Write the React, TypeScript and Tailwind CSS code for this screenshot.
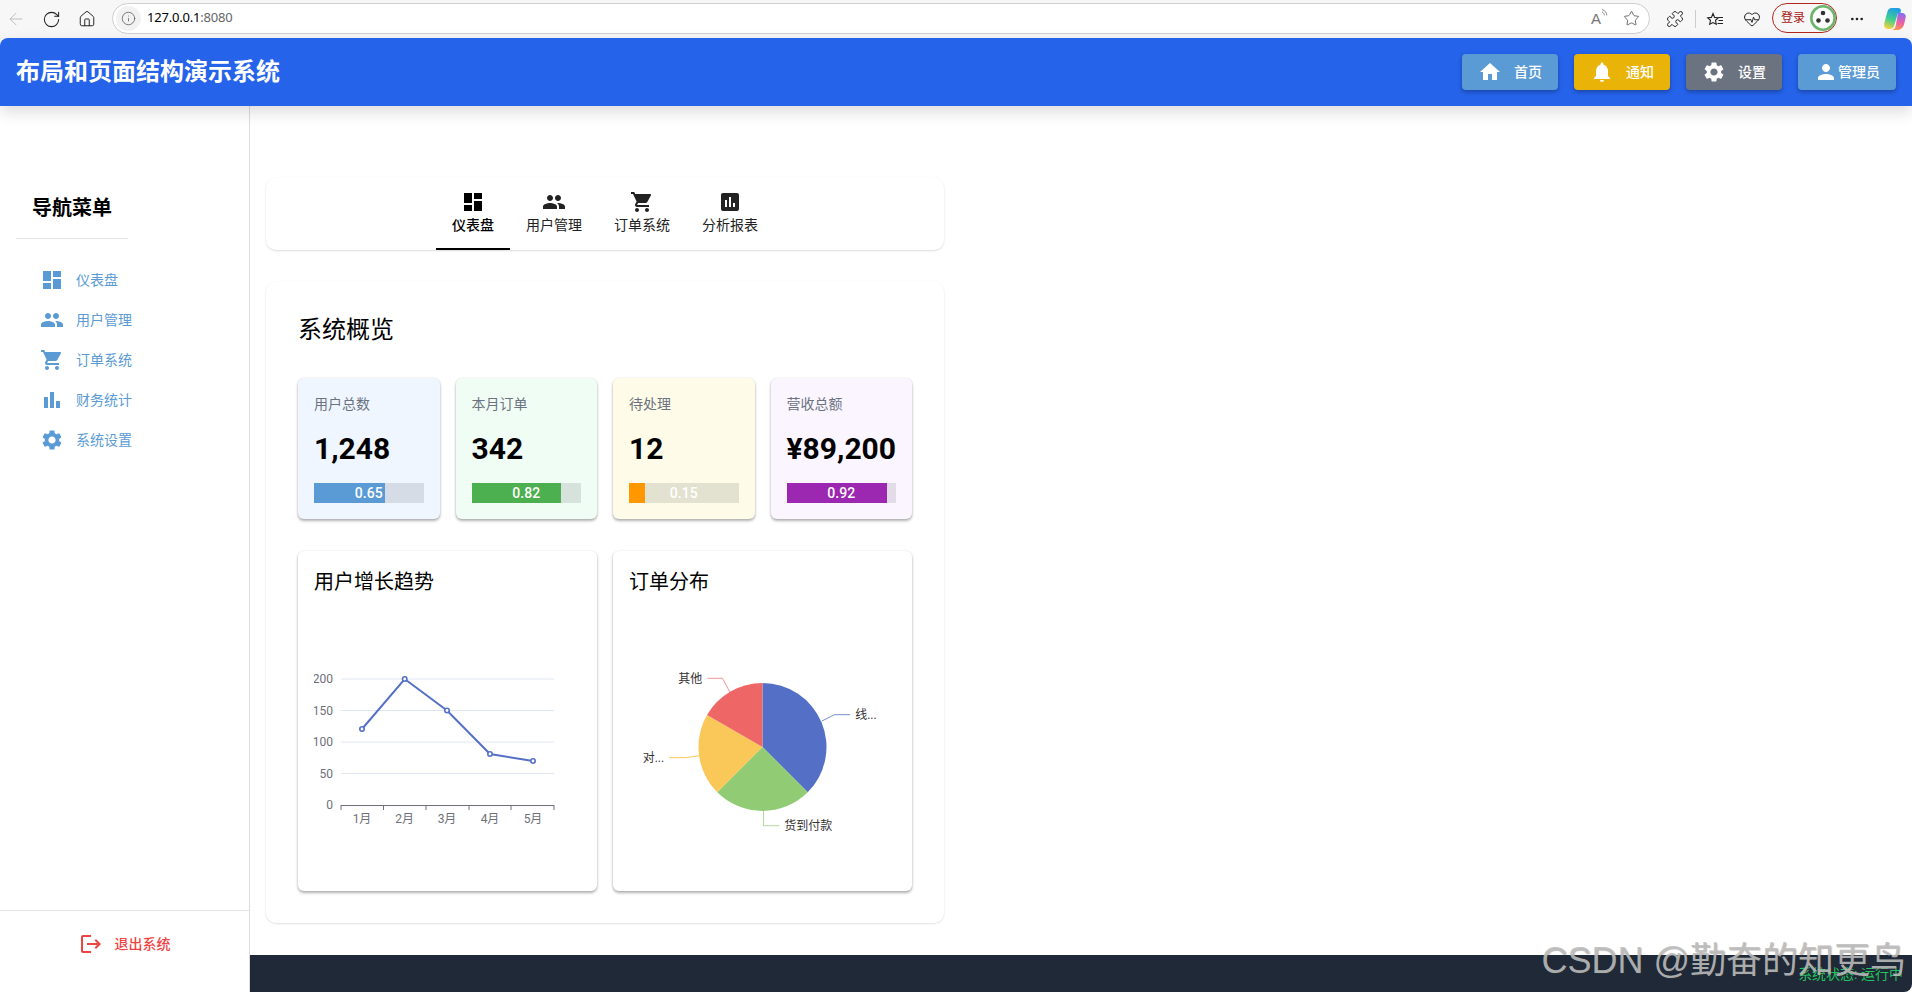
import React from "react";
import { MdDashboard, MdPeople, MdShoppingCart, MdAssessment, MdBarChart, MdSettings, MdHome, MdNotifications, MdPerson, MdLogout } from "react-icons/md";
import { ArrowLeft, RotateCw, Home, Info, Star, Puzzle, HeartPulse, MoreHorizontal } from "lucide-react";

const sideItems = [
  { icon: MdDashboard, label: "仪表盘" },
  { icon: MdPeople, label: "用户管理" },
  { icon: MdShoppingCart, label: "订单系统" },
  { icon: MdBarChart, label: "财务统计" },
  { icon: MdSettings, label: "系统设置" },
];

const tabs = [
  { icon: MdDashboard, label: "仪表盘", active: true },
  { icon: MdPeople, label: "用户管理" },
  { icon: MdShoppingCart, label: "订单系统" },
  { icon: MdAssessment, label: "分析报表" },
];

const stats = [
  { label: "用户总数", value: "1,248", p: 0.65, bg: "bg-[#eff6ff]", fill: "bg-[#5b9bd5]", track: "bg-[#d5dce6]" },
  { label: "本月订单", value: "342", p: 0.82, bg: "bg-[#f0fdf4]", fill: "bg-[#4caf50]", track: "bg-[#d8e2dc]" },
  { label: "待处理", value: "12", p: 0.15, bg: "bg-[#fefce8]", fill: "bg-[#ff9800]", track: "bg-[#e3e2d1]" },
  { label: "营收总额", value: "¥89,200", p: 0.92, bg: "bg-[#faf5ff]", fill: "bg-[#9c27b0]", track: "bg-[#e2dce8]" },
];

function HeaderBtn({ icon: Icon, label, cls, gap }: { icon: any; label: string; cls: string; gap: string }) {
  return (
    <div className={`h-9 px-4 rounded flex items-center text-white text-sm font-medium shadow-[0_2px_4px_rgba(0,0,0,0.3)] ${gap} ${cls}`}>
      <Icon size={24} />
      <span>{label}</span>
    </div>
  );
}

function LineChart() {
  const pts: [number, number][] = [[362, 729], [404.7, 679], [447, 710.5], [490, 754], [533, 761]];
  const ys = [[679, "200"], [710.5, "150"], [742, "100"], [773.5, "50"]] as const;
  const ticks = [341, 383.5, 426, 469, 511, 554];
  return (
    <svg viewBox="314 600 267 275" width={267} height={275} className="block">
      {ys.map(([y]) => (
        <line key={y} x1={341} x2={554} y1={y} y2={y} stroke="#e0e6f1" />
      ))}
      {ys.map(([y, t]) => (
        <text key={t} x={333} y={y + 4} textAnchor="end" fontSize={12} fill="#6e7079">{t}</text>
      ))}
      <text x={333} y={809} textAnchor="end" fontSize={12} fill="#6e7079">0</text>
      <line x1={341} x2={554} y1={805.5} y2={805.5} stroke="#6e7079" />
      {ticks.map((x) => (
        <line key={x} x1={x} x2={x} y1={805} y2={810} stroke="#6e7079" />
      ))}
      {["1月", "2月", "3月", "4月", "5月"].map((t, i) => (
        <text key={t} x={pts[i][0]} y={823} textAnchor="middle" fontSize={12} fill="#6e7079">{t}</text>
      ))}
      <polyline points={pts.map((p) => p.join(",")).join(" ")} fill="none" stroke="#5470c6" strokeWidth={2} />
      {pts.map((p) => (
        <circle key={p[0]} cx={p[0]} cy={p[1]} r={2.2} fill="#fff" stroke="#5470c6" strokeWidth={1.6} />
      ))}
    </svg>
  );
}

function PieChart() {
  return (
    <svg viewBox="628.8 600 267 275" width={267} height={275} className="block">
      <path d="M762.3 747 L762.3 683 A64 64 0 0 1 807.55 792.25 Z" fill="#5470c6" />
      <path d="M762.3 747 L807.55 792.25 A64 64 0 0 1 717.05 792.25 Z" fill="#91cc75" />
      <path d="M762.3 747 L717.05 792.25 A64 64 0 0 1 706.87 715 Z" fill="#fac858" />
      <path d="M762.3 747 L706.87 715 A64 64 0 0 1 762.3 683 Z" fill="#ee6666" />
      <polyline points="821.7,721 834.3,714.7 850,714.7" fill="none" stroke="#5470c6" strokeOpacity={0.8} />
      <polyline points="763.3,810.7 763.3,825.7 779,825.7" fill="none" stroke="#91cc75" strokeOpacity={0.7} />
      <polyline points="699.3,755.7 685,757.7 669,757.7" fill="none" stroke="#fac858" />
      <polyline points="730,692.7 722.3,678.3 707.3,678.3" fill="none" stroke="#ee6666" strokeOpacity={0.7} />
      <text x={855} y={718.5} fontSize={12} fill="#333">线...</text>
      <text x={784} y={829.5} fontSize={12} fill="#333">货到付款</text>
      <text x={664} y={761.5} textAnchor="end" fontSize={12} fill="#333">对...</text>
      <text x={702} y={682.5} textAnchor="end" fontSize={12} fill="#333">其他</text>
    </svg>
  );
}

function BrowserBar() {
  return (
    <div className="h-[38px] shrink-0 flex items-center text-[#222]">
      <div className="w-[112px] shrink-0 flex items-center">
        <ArrowLeft size={20} strokeWidth={1} className="ml-[6px] text-[#b5b5b5]" />
        <RotateCw size={19} strokeWidth={1.3} className="ml-[16px]" />
        <Home size={18} strokeWidth={1.3} className="ml-[17px]" />
      </div>
      <div className="w-[1538px] h-[31px] -mt-[2px] rounded-full border border-[#cfcfcf] bg-white flex items-center pl-[3px] pr-[9px]">
        <div className="w-[25px] h-[25px] rounded-full bg-[#f2f2f2] flex items-center justify-center">
          <Info size={15} strokeWidth={1.2} className="text-[#555]" />
        </div>
        <span className="ml-[6px] text-[13px] text-black font-['Noto_Sans',sans-serif] tracking-[-0.2px]">127.0.0.1<span className="text-[#666]">:8080</span></span>
        <div className="ml-auto flex items-center">
          <span className="text-[15px] font-light leading-none text-[#777] font-['Liberation_Sans',sans-serif]">A</span>
          <svg width="7" height="12" viewBox="0 0 7 12" fill="none" stroke="#777" strokeWidth="0.9" className="-mt-[6px]">
            <path d="M1 3c1.5.6 2.400 2 2.400 3.400M1 .6c3 .8 4.800 3.200 4.800 5.800" />
          </svg>
          <Star size={17} strokeWidth={1.2} className="ml-[15px] text-[#555]" />
        </div>
      </div>
      <Puzzle size={18} strokeWidth={1.3} className="ml-[16px]" />
      <div className="ml-[11px] w-px h-[18px] bg-[#ccc]" />
      <svg width="18" height="18" viewBox="0 0 18 18" fill="none" stroke="#222" strokeWidth="1.1" className="ml-[10px]">
        <path d="M7 1.500l1.600 3.900 3.700.4-2.800 2.500.8 4L7 10.600l-3.300 1.700.8-4L1.700 5.800l3.700-.4z" transform="translate(0 2)" />
        <path d="M12.500 7.500h4.500M12.500 10.500h4.500M11.500 13.500h5.500" />
      </svg>
      <HeartPulse size={18} strokeWidth={1.3} className="ml-[19px]" />
      <div className="ml-[11px] w-[65px] h-[30px] -mt-[2px] rounded-full border border-[#b3261e] flex items-center justify-between pl-[8px]">
        <span className="text-[12px] text-[#a8160f] leading-none">登录</span>
        <svg width="26" height="26" viewBox="0 0 26 26">
          <circle cx="13" cy="13" r="11.700" fill="#fff" stroke="#6cb56c" strokeWidth="2.600" />
          <circle cx="13" cy="8" r="2.300" fill="#333" />
          <circle cx="8.500" cy="15.500" r="2.300" fill="#333" />
          <circle cx="17.500" cy="15.500" r="2.300" fill="#333" />
        </svg>
      </div>
      <MoreHorizontal size={16} strokeWidth={2} className="ml-[12px]" />
      <svg width="24" height="24" viewBox="0 0 24 24" className="ml-[18px]">
        <defs>
          <linearGradient id="cp1" x1="0.6" y1="0" x2="0.3" y2="1">
            <stop offset="0" stopColor="#1f9ce8" />
            <stop offset="0.55" stopColor="#3fcf8e" />
            <stop offset="1" stopColor="#f5d23d" />
          </linearGradient>
          <linearGradient id="cp2" x1="0.6" y1="0" x2="0.4" y2="1">
            <stop offset="0" stopColor="#8a6cf0" />
            <stop offset="0.55" stopColor="#ee5fa7" />
            <stop offset="1" stopColor="#f79a4c" />
          </linearGradient>
        </defs>
        <path d="M15 6h4.500c2.500 0 3.700 2.200 3.200 4.500l-1.700 7C20.300 20.300 18 23 14.500 23H8c2.500 0 4-1.500 4.700-4z" fill="url(#cp2)" />
        <path d="M8.500 1h6.500c1.600 0 2.700.8 3 2.200L17.500 6H15l-3.800 12.500C10.600 20.500 9 22 6.500 22H5c-3 0-4.500-3-3.700-6L4.300 5C5 2.500 6.500 1 8.500 1z" fill="url(#cp1)" />
      </svg>
    </div>
  );
}

export default function App() {
  return (
    <div className="w-full h-[992px] overflow-hidden rounded-b-lg flex flex-col bg-[#f7f7f7] font-[Roboto,'Noto_Sans_CJK_SC',sans-serif] relative">
      <BrowserBar />
      <header className="relative z-10 h-[68px] shrink-0 rounded-t-lg bg-[#2563eb] shadow-[0_6px_16px_rgba(0,0,0,0.14)] flex items-center justify-between pl-4 pr-4">
        <h1 className="text-2xl font-bold text-white">布局和页面结构演示系统</h1>
        <div className="flex items-center gap-4">
          <HeaderBtn icon={MdHome} label="首页" cls="bg-[#5b9bd5]" gap="gap-3" />
          <HeaderBtn icon={MdNotifications} label="通知" cls="bg-[#eab308]" gap="gap-3" />
          <HeaderBtn icon={MdSettings} label="设置" cls="bg-[#6b7280]" gap="gap-3" />
          <HeaderBtn icon={MdPerson} label="管理员" cls="bg-[#5b9bd5]" gap="gap-0" />
        </div>
      </header>
      <div className="flex-1 flex min-h-0 bg-white">
        <aside className="w-[250px] shrink-0 border-r border-[#dcdcdc] flex flex-col">
          <div className="pt-[88px] pl-4">
            <div className="inline-block px-4 pb-[16px] border-b border-[#e5e5e5] text-xl font-bold text-black leading-7">导航菜单</div>
          </div>
          <nav className="mt-[21px] flex-1">
            {sideItems.map(({ icon: Icon, label }) => (
              <div key={label} className="h-10 pl-10 flex items-center gap-3 text-sm text-[#5b9bd5]">
                <Icon size={24} />
                <span>{label}</span>
              </div>
            ))}
          </nav>
          <div className="h-[82px] border-t border-[#e5e5e5] pt-[21px] flex justify-center gap-3 text-sm font-medium text-[#ef4444]">
            <MdLogout size={24} />
            <span className="leading-6">退出系统</span>
          </div>
        </aside>
        <div className="flex-1 min-w-0 flex flex-col">
          <main className="flex-1 min-h-0 pt-[72px] pl-4">
            <div className="w-[678px] flex flex-col gap-8">
              <div className="h-[72px] rounded-[10px] shadow-[0_1px_2px_rgba(0,0,0,0.13),0_0_3px_rgba(0,0,0,0.03)] flex justify-center">
                {tabs.map(({ icon: Icon, label, active }) => (
                  <div key={label} className={`px-4 flex flex-col items-center pt-[12px] text-sm leading-5 ${active ? "text-black border-b-2 border-black font-medium" : "text-[#222]"}`}>
                    <Icon size={24} className="mb-[1px]" />
                    <span>{label}</span>
                  </div>
                ))}
              </div>
              <div className="rounded-[10px] shadow-[0_1px_2px_rgba(0,0,0,0.11),0_0_3px_rgba(0,0,0,0.03)] p-8">
                <h2 className="text-2xl leading-8 text-black">系统概览</h2>
                <div className="mt-8 grid grid-cols-4 gap-4">
                  {stats.map((s) => (
                    <div key={s.label} className={`h-[141px] rounded-md p-4 shadow-[0_2px_3px_rgba(0,0,0,0.3),0_0_2px_rgba(0,0,0,0.1)] ${s.bg}`}>
                      <div className="text-sm leading-5 text-[#6b7280]">{s.label}</div>
                      <div className="mt-[15px] text-[30px] leading-10 font-bold text-black">{s.value}</div>
                      <div className={`relative mt-[14px] h-5 ${s.track}`}>
                        <div className={`h-full ${s.fill}`} style={{ width: `${s.p * 100}%` }} />
                        <span className="absolute inset-0 flex items-center justify-center text-sm font-medium text-white">{s.p.toFixed(2)}</span>
                      </div>
                    </div>
                  ))}
                </div>
                <div className="mt-8 grid grid-cols-2 gap-4">
                  <div className="h-[340px] rounded-md bg-white pt-[17px] px-4 shadow-[0_2px_3px_rgba(0,0,0,0.3),0_0_2px_rgba(0,0,0,0.1)]">
                    <h3 className="text-xl leading-7 text-black">用户增长趋势</h3>
                    <div className="mt-1"><LineChart /></div>
                  </div>
                  <div className="h-[340px] rounded-md bg-white pt-[17px] px-4 shadow-[0_2px_3px_rgba(0,0,0,0.3),0_0_2px_rgba(0,0,0,0.1)]">
                    <h3 className="text-xl leading-7 text-black">订单分布</h3>
                    <div className="mt-1"><PieChart /></div>
                  </div>
                </div>
              </div>
            </div>
          </main>
          <footer className="h-[37px] shrink-0 bg-[#1f2937] flex items-center justify-end pr-[9px] text-sm text-[#22c55e]">系统状态: 运行中</footer>
        </div>
      </div>
      <div className="absolute right-[6px] bottom-[7px] text-[36px] leading-[48px] whitespace-nowrap text-[#bdbdbd]/90 font-['Liberation_Sans','Noto_Sans_CJK_SC',sans-serif] [text-shadow:1px_1px_1px_rgba(60,60,60,0.35)]">CSDN @勤奋的知更鸟</div>
    </div>
  );
}
